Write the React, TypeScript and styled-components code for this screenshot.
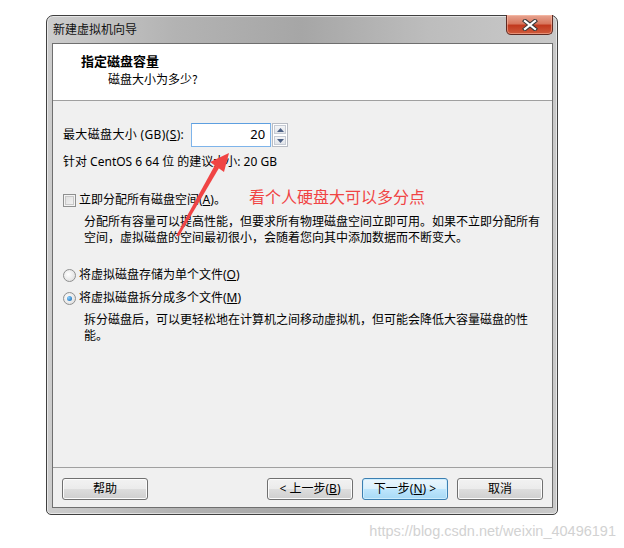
import React from "react";
import styled, { createGlobalStyle } from "styled-components";

const Global = createGlobalStyle`
  html, body { margin: 0; padding: 0; background: #ffffff; }
  body { font-family: "Noto Sans", "Noto Sans CJK SC", sans-serif; font-size: 12px; color: #000; }
  u { text-decoration: underline; text-underline-offset: 1px; }
`;

const Page = styled.div`
  position: relative;
  width: 624px;
  height: 548px;
  padding: 15px 0 0 46px;
  box-sizing: border-box;
`;

const Window = styled.div`
  width: 512px;
  height: 500px;
  box-sizing: border-box;
  border: 1px solid #404040;
  border-radius: 7px 7px 5px 5px;
  background: linear-gradient(90deg, #cdcdcd 0%, #b3b3b3 25%, #a6a6a6 50%, #bdbdbd 75%, #c9c9c9 100%);
  box-shadow: inset 0 0 0 1px rgba(255, 255, 255, 0.55);
  display: flex;
  flex-direction: column;
  padding: 0 4px 6px 5px;
`;

const TitleBar = styled.div`
  height: 27px;
  display: flex;
  align-items: flex-start;
  flex-shrink: 0;
`;

const TitleText = styled.div`
  font-family: "Noto Sans CJK SC", sans-serif;
  font-size: 12px;
  line-height: 14px;
  margin-top: 6px;
  margin-left: 1px;
  color: #111;
`;

const CloseButton = styled.div`
  margin-left: auto;
  margin-top: -1px;
  width: 47px;
  height: 20px;
  box-sizing: border-box;
  border: 1px solid #5e2a22;
  border-top: none;
  border-radius: 0 0 5px 5px;
  background: linear-gradient(180deg, #e8a592 0%, #d8785f 45%, #c23a1f 55%, #cf5b3c 100%);
  box-shadow: inset 0 0 0 1px rgba(255, 200, 180, 0.5);
  display: flex;
  align-items: center;
  justify-content: center;
`;

const Client = styled.div`
  flex: 1;
  box-sizing: border-box;
  border: 1px solid #6f6f6f;
  background: #f0f0f0;
  display: flex;
  flex-direction: column;
`;

const Header = styled.div`
  height: 57px;
  box-sizing: border-box;
  background: #ffffff;
  border-bottom: 1px solid #a0a0a0;
  padding: 8px 0 0 28px;
  flex-shrink: 0;
`;

const HeaderTitle = styled.div`
  font-family: "Noto Sans CJK SC", sans-serif;
  font-weight: bold;
  font-size: 13px;
  line-height: 17px;
`;

const HeaderSub = styled.div`
  font-family: "Noto Sans CJK SC", sans-serif;
  font-size: 12px;
  line-height: 17px;
  padding-left: 27px;
  margin-top: 1px;
`;

const Body = styled.div`
  flex: 1;
  display: flex;
  flex-direction: column;
  padding: 22px 0 0 10px;
`;

const SpinRow = styled.div`
  display: flex;
  align-items: center;
  height: 24px;
`;

const Label = styled.span`
  line-height: 16px;
  margin-right: 7px;
  letter-spacing: 0.35px;
`;

const SpinBox = styled.div`
  display: flex;
  height: 24px;
`;

const SpinInput = styled.div`
  width: 80px;
  height: 24px;
  box-sizing: border-box;
  border: 1px solid #7eb4ea;
  border-top-color: #5d9fe0;
  background: #fff;
  text-align: right;
  font-size: 13px;
  line-height: 20px;
  padding-right: 5px;
`;

const SpinButtons = styled.div`
  width: 16px;
  display: flex;
  flex-direction: column;
  margin-left: 1px;
  border: 1px solid #b8bcc4;
  box-sizing: border-box;
  background: #fff;
`;

const SpinBtn = styled.div`
  flex: 1;
  margin: 1px;
  border: 1px solid #c6cbd4;
  background: linear-gradient(180deg, #f4f5f7, #e2e5ea);
  display: flex;
  align-items: center;
  justify-content: center;
`;

const Hint = styled.div`
  line-height: 16px;
  margin-top: 7px;
`;

const OptionRow = styled.div<{ $top: number }>`
  display: flex;
  align-items: center;
  margin-top: ${(p) => p.$top}px;
  height: 16px;
  line-height: 16px;
`;

const CheckBox = styled.div`
  width: 13px;
  height: 13px;
  box-sizing: border-box;
  border: 1px solid #8e8f8f;
  background: linear-gradient(135deg, #dcdcdc, #f6f6f6);
  box-shadow: inset 0 0 0 1px #f4f4f4, inset 0 0 0 2px #c8c8c8;
  margin-right: 3px;
`;

const Radio = styled.div<{ $checked?: boolean }>`
  width: 13px;
  height: 13px;
  box-sizing: border-box;
  border-radius: 50%;
  border: 1px solid #8e8f8f;
  background: radial-gradient(circle at 40% 40%, #ffffff, #d8d8d8);
  margin-right: 3px;
  display: flex;
  align-items: center;
  justify-content: center;
  &::after {
    content: "";
    display: ${(p) => (p.$checked ? "block" : "none")};
    width: 5px;
    height: 5px;
    border-radius: 50%;
    background: radial-gradient(circle at 35% 35%, #8ad0ff, #0f5fa8);
  }
`;

const Desc = styled.div<{ $top: number; $lh: number }>`
  padding-left: 21px;
  margin-top: ${(p) => p.$top}px;
  line-height: ${(p) => p.$lh}px;
  font-family: "Noto Sans CJK SC", sans-serif;
  white-space: nowrap;
`;

const Footer = styled.div`
  margin-top: auto;
  margin-left: -10px;
  border-top: 1px solid #a0a0a0;
  padding: 10px 9px 7px 9px;
  display: flex;
  gap: 9px;
`;

const Spacer = styled.div`
  flex: 1;
`;

const Button = styled.div<{ $default?: boolean }>`
  width: 86px;
  height: 22px;
  box-sizing: border-box;
  border: 1px solid ${(p) => (p.$default ? "#3c7fb1" : "#707070")};
  border-radius: 3px;
  background: ${(p) =>
    p.$default
      ? "linear-gradient(180deg, #eaf6fd 0%, #d9f0fc 50%, #bee6fd 51%, #a7d9f5 100%)"
      : "linear-gradient(180deg, #f2f2f2 0%, #ebebeb 50%, #dddddd 51%, #cfcfcf 100%)"};
  box-shadow: inset 0 0 0 1px ${(p) => (p.$default ? "#cdeeff" : "#fcfcfc")};
  display: flex;
  align-items: center;
  justify-content: center;
  line-height: 16px;
  font-family: "Noto Sans", "Noto Sans CJK SC", sans-serif;
`;

const Annotation = styled.div`
  position: absolute;
  left: 249px;
  top: 186px;
  font-family: "Noto Sans CJK SC", sans-serif;
  font-size: 16px;
  line-height: 20px;
  color: #f04444;
`;

const ArrowSvg = styled.svg`
  position: absolute;
  left: 0;
  top: 0;
  pointer-events: none;
`;

const Watermark = styled.div`
  margin-top: 8px;
  width: 570px;
  text-align: right;
  font-family: "Liberation Sans", Arial, sans-serif;
  font-size: 14.5px;
  line-height: 16px;
  color: #d2d2d2;
`;

export default function App() {
  return (
    <>
      <Global />
      <Page>
        <Window>
          <TitleBar>
            <TitleText>新建虚拟机向导</TitleText>
            <CloseButton>
              <svg width="16" height="12" viewBox="0 0 16 12">
                <path d="M3 2 L13 10 M13 2 L3 10" stroke="#3a3a3a" strokeWidth="4.2" strokeLinecap="square" />
                <path d="M3 2 L13 10 M13 2 L3 10" stroke="#ffffff" strokeWidth="2.2" strokeLinecap="square" />
              </svg>
            </CloseButton>
          </TitleBar>
          <Client>
            <Header>
              <HeaderTitle>指定磁盘容量</HeaderTitle>
              <HeaderSub>磁盘大小为多少?</HeaderSub>
            </Header>
            <Body>
              <SpinRow>
                <Label>
                  最大磁盘大小 (GB)(<u>S</u>):
                </Label>
                <SpinBox>
                  <SpinInput>20</SpinInput>
                  <SpinButtons>
                    <SpinBtn>
                      <svg width="7" height="4" viewBox="0 0 7 4">
                        <path d="M0 4 L3.5 0 L7 4 Z" fill="#4d6185" />
                      </svg>
                    </SpinBtn>
                    <SpinBtn>
                      <svg width="7" height="4" viewBox="0 0 7 4">
                        <path d="M0 0 L3.5 4 L7 0 Z" fill="#4d6185" />
                      </svg>
                    </SpinBtn>
                  </SpinButtons>
                </SpinBox>
              </SpinRow>
              <Hint>针对 CentOS 6 64 位 的建议大小: 20 GB</Hint>
              <OptionRow $top={22}>
                <CheckBox />
                <span>
                  立即分配所有磁盘空间(<u>A</u>)。
                </span>
              </OptionRow>
              <Desc $top={5} $lh={16}>
                分配所有容量可以提高性能，但要求所有物理磁盘空间立即可用。如果不立即分配所有
                <br />
                空间，虚拟磁盘的空间最初很小，会随着您向其中添加数据而不断变大。
              </Desc>
              <OptionRow $top={22}>
                <Radio />
                <span>
                  将虚拟磁盘存储为单个文件(<u>O</u>)
                </span>
              </OptionRow>
              <OptionRow $top={7}>
                <Radio $checked />
                <span>
                  将虚拟磁盘拆分成多个文件(<u>M</u>)
                </span>
              </OptionRow>
              <Desc $top={5} $lh={16}>
                拆分磁盘后，可以更轻松地在计算机之间移动虚拟机，但可能会降低大容量磁盘的性
                <br />
                能。
              </Desc>
              <Footer>
                <Button>帮助</Button>
                <Spacer />
                <Button>
                  &lt; 上一步(<u>B</u>)
                </Button>
                <Button $default>
                  下一步(<u>N</u>) &gt;
                </Button>
                <Button>取消</Button>
              </Footer>
            </Body>
          </Client>
        </Window>
        <Watermark>https://blog.csdn.net/weixin_40496191</Watermark>
        <Annotation>看个人硬盘大可以多分点</Annotation>
        <ArrowSvg width="624" height="548" viewBox="0 0 624 548">
          <path d="M176 236 L179 236 L219 168 L215 165 Z" fill="#f04444" />
          <path d="M229 153 L210 162 L224 172 Z" fill="#f04444" />
        </ArrowSvg>
      </Page>
    </>
  );
}
